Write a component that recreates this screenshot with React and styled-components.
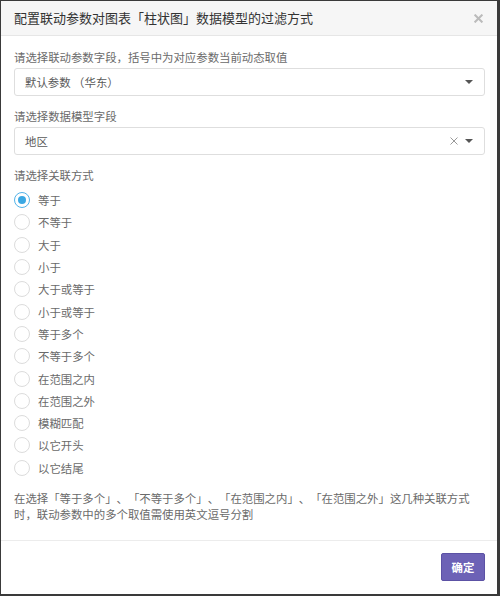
import React, { useState } from "react";
import styled, { createGlobalStyle } from "styled-components";

const GlobalStyle = createGlobalStyle`
  html, body {
    margin: 0;
    padding: 0;
    background: #3a3a3a;
  }
  body {
    font-family: "Noto Sans CJK SC", "Noto Sans", sans-serif;
    text-spacing-trim: space-all;
  }
`;

const Backdrop = styled.div`
  padding: 1px 2px 2px 1px;
`;

const Dialog = styled.div`
  width: 496px;
  height: 593px;
  background: #fff;
  display: flex;
  flex-direction: column;
  box-sizing: border-box;
`;

const Header = styled.div`
  height: 35px;
  box-sizing: border-box;
  background: #f6f6f6;
  border-bottom: 1px solid #e6e6e6;
  display: flex;
  align-items: center;
  justify-content: space-between;
  padding: 0 14px 0 13px;
`;

const Title = styled.h4`
  margin: 0;
  font-size: 13px;
  font-weight: normal;
  color: #333;
  line-height: 18px;
`;

const Close = styled.button`
  border: none;
  background: none;
  padding: 0;
  width: 10px;
  height: 10px;
  display: flex;
  align-items: center;
  justify-content: center;
  cursor: pointer;
`;

const Body = styled.div`
  flex: 1;
  padding: 13px 12px 0 13px;
  border-bottom: 1px solid #ececec;
`;

const Label = styled.div`
  font-size: 11.4px;
  line-height: 17px;
  color: #6a6a6a;
  margin-bottom: ${(p) => p.$gap || 0}px;
`;

const Select = styled.div`
  height: 28px;
  box-sizing: border-box;
  border: 1px solid #dedede;
  border-radius: 3px;
  display: flex;
  align-items: center;
  padding: 0 11px 0 10px;
  margin-bottom: ${(p) => p.$gap || 0}px;
  font-size: 11.4px;
  color: #5a5a5a;
`;

const Value = styled.span`
  flex: 1;
`;

const Icons = styled.span`
  display: flex;
  align-items: center;
  gap: 7px;
`;

const RadioList = styled.div`
  display: flex;
  flex-direction: column;
  margin-top: 5px;
`;

const RadioRow = styled.label`
  height: 22.3px;
  display: flex;
  align-items: center;
  gap: 8px;
  font-size: 11.4px;
  color: #6a6a6a;
  cursor: pointer;
`;

const RadioCircle = styled.span`
  width: 16px;
  height: 16px;
  box-sizing: border-box;
  border-radius: 50%;
  border: 1px solid ${(p) => (p.$on ? "#53b3e8" : "#dcdcdc")};
  display: flex;
  align-items: center;
  justify-content: center;
  background: #fff;

  &::after {
    content: "";
    width: 8px;
    height: 8px;
    border-radius: 50%;
    background: ${(p) => (p.$on ? "#3ba8e3" : "transparent")};
  }
`;

const Note = styled.p`
  margin: 11px 0 0;
  font-size: 11.4px;
  line-height: 16px;
  color: #6a6a6a;
`;

const Footer = styled.div`
  height: 52px;
  display: flex;
  align-items: center;
  justify-content: flex-end;
  padding: 0 12px 1px;
`;

const Confirm = styled.button`
  width: 44px;
  height: 28px;
  background: #6d62b6;
  border: 1px solid #5c52a5;
  border-radius: 2px;
  color: #fff;
  font-family: inherit;
  font-size: 11.4px;
  font-weight: bold;
  padding: 0;
  cursor: pointer;
`;

const Caret = () => (
  <svg width="8" height="4" viewBox="0 0 8 4">
    <path d="M0 0h8L4 4z" fill="#555" />
  </svg>
);

const Cross = ({ size = 8, color = "#999", w = 1 }) => (
  <svg width={size} height={size} viewBox="0 0 8 8">
    <path d="M0.5 0.5l7 7M7.5 0.5l-7 7" stroke={color} strokeWidth={w} />
  </svg>
);

const OPTIONS = [
  "等于",
  "不等于",
  "大于",
  "小于",
  "大于或等于",
  "小于或等于",
  "等于多个",
  "不等于多个",
  "在范围之内",
  "在范围之外",
  "模糊匹配",
  "以它开头",
  "以它结尾",
];

export default function App() {
  const [picked, setPicked] = useState(0);
  return (
    <Backdrop>
      <GlobalStyle />
      <Dialog>
        <Header>
          <Title>配置联动参数对图表「柱状图」数据模型的过滤方式</Title>
          <Close aria-label="关闭">
            <Cross size={9} color="#bbb" w={1.8} />
          </Close>
        </Header>
        <Body>
          <Label $gap={2}>请选择联动参数字段，括号中为对应参数当前动态取值</Label>
          <Select $gap={12}>
            <Value>默认参数 （华东）</Value>
            <Icons>
              <Caret />
            </Icons>
          </Select>
          <Label $gap={2}>请选择数据模型字段</Label>
          <Select $gap={12}>
            <Value>地区</Value>
            <Icons>
              <Cross />
              <Caret />
            </Icons>
          </Select>
          <Label>请选择关联方式</Label>
          <RadioList>
            {OPTIONS.map((o, i) => (
              <RadioRow key={o} onClick={() => setPicked(i)}>
                <RadioCircle $on={picked === i} />
                {o}
              </RadioRow>
            ))}
          </RadioList>
          <Note>
            在选择「等于多个」、「不等于多个」、「在范围之内」、「在范围之外」这几种关联方式时，联动参数中的多个取值需使用英文逗号分割
          </Note>
        </Body>
        <Footer>
          <Confirm>确定</Confirm>
        </Footer>
      </Dialog>
    </Backdrop>
  );
}
